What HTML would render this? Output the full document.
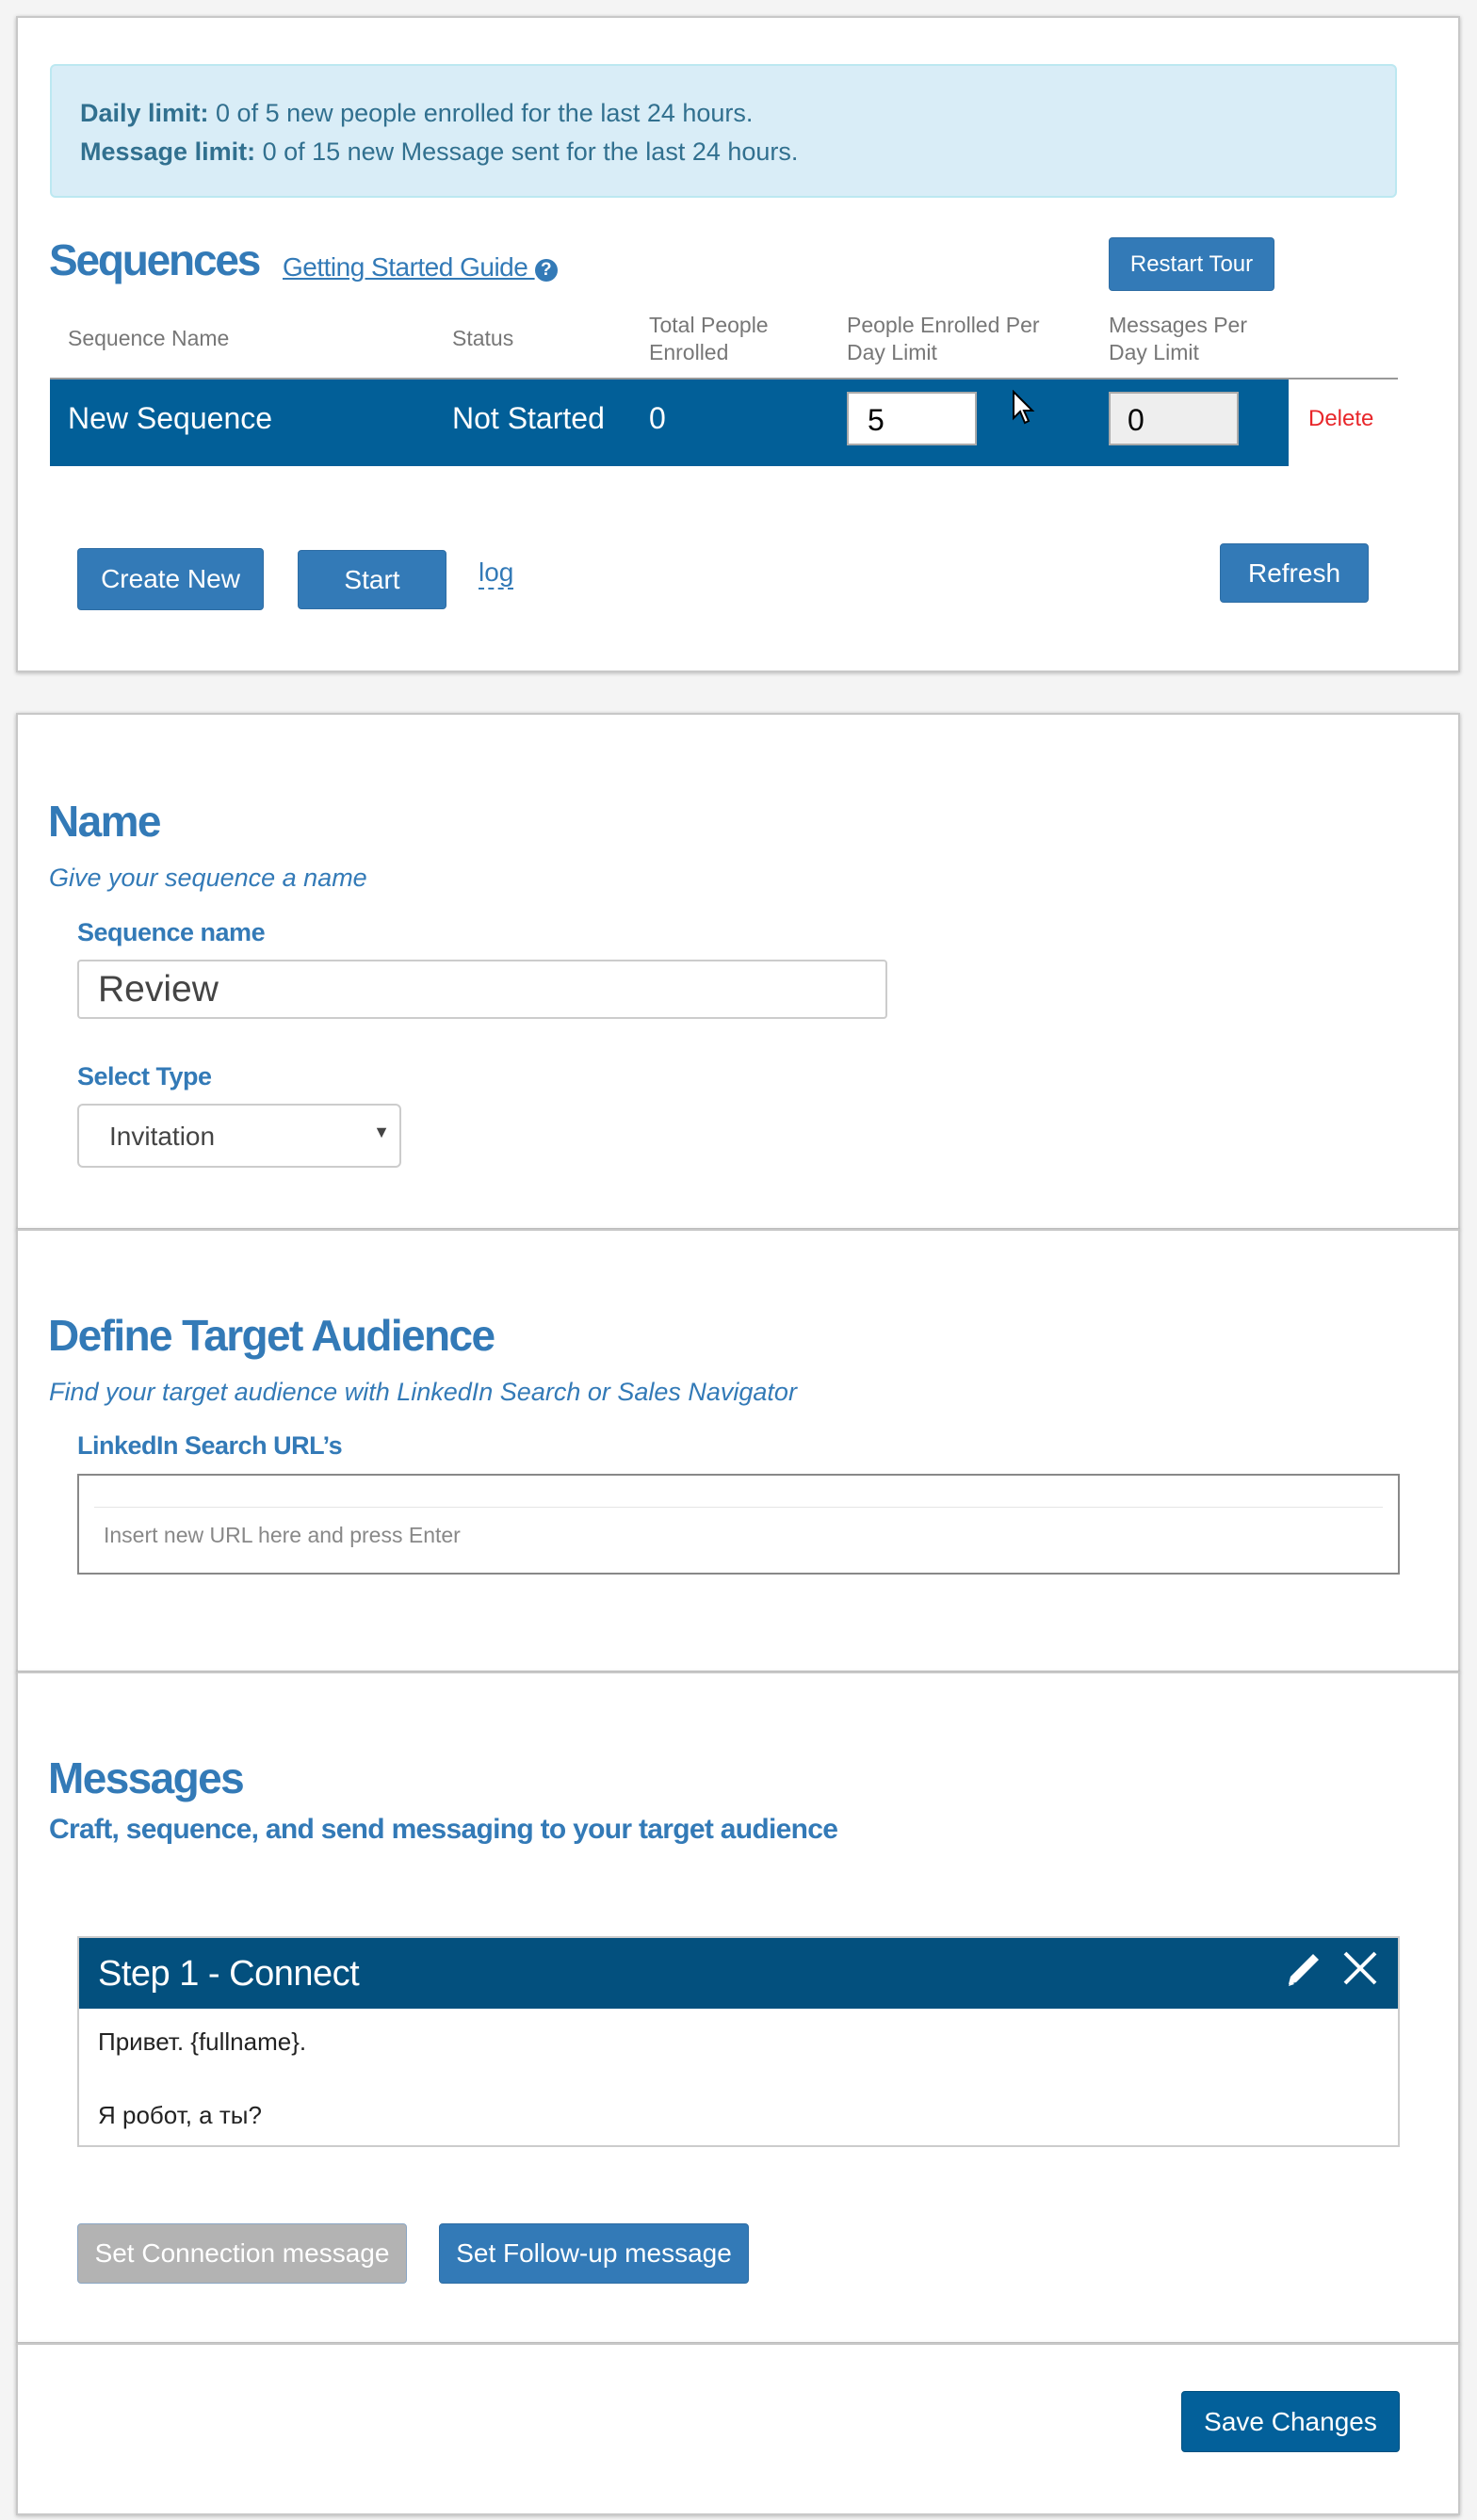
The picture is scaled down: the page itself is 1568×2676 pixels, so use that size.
<!DOCTYPE html>
<html><head><meta charset="utf-8"><style>
*{box-sizing:border-box;margin:0;padding:0}
body{width:1568px;height:2676px;background:#f4f4f4;position:relative;font-family:"Liberation Sans","Noto Sans CJK SC",sans-serif;overflow:hidden}
.a{position:absolute;white-space:nowrap}
.card{position:absolute;left:17px;width:1533px;background:#fff;border:2px solid #c8c8c8;box-shadow:0 1px 4px rgba(0,0,0,.25)}
.btn{position:absolute;background:#337ab7;border:1px solid #2e6da4;border-radius:4px;color:#fff;font-size:28px;display:flex;align-items:center;justify-content:center}
.h{color:#337ab7;font-size:46px;letter-spacing:-1.6px;font-weight:bold}
.sub{color:#337ab7;font-size:27px;font-style:italic}
.lbl{color:#337ab7;font-size:27px;font-weight:bold;letter-spacing:-.5px}
.th{color:#777;font-size:23px;line-height:29px}
.tr{color:#fff;font-size:32px;top:426px}
</style></head><body>
<div class="card" style="top:17px;height:697px"></div>
<div class="card" style="top:757px;height:549px"></div>
<div class="card" style="top:1305px;height:471px"></div>
<div class="card" style="top:1775px;height:714px"></div>
<div class="card" style="top:2488px;height:183px"></div>

<div class="a" style="left:53px;top:68px;width:1430px;height:142px;background:#d9edf7;border:2px solid #bce8f1;border-radius:6px"></div>
<div class="a" style="left:85px;top:100px;color:#31708f;font-size:27px;line-height:41px"><b>Daily limit:</b> 0 of 5 new people enrolled for the last 24 hours.<br><b>Message limit:</b> 0 of 15 new Message sent for the last 24 hours.</div>

<div class="a h" style="left:52px;top:249px;letter-spacing:-2.2px">Sequences</div>
<div class="a" style="left:300px;top:268px;color:#337ab7;font-size:28px;text-decoration:underline;letter-spacing:-.5px;font-weight:500">Getting Started Guide <span style="display:inline-block;width:24px;height:24px;border-radius:50%;background:#337ab7;color:#fff;font-size:19px;text-align:center;line-height:24px;font-weight:bold;vertical-align:1px;text-decoration:none">?</span></div>
<div class="btn" style="left:1177px;top:252px;width:176px;height:57px;font-size:24px">Restart Tour</div>

<div class="a th" style="left:72px;top:345px">Sequence Name</div>
<div class="a th" style="left:480px;top:345px">Status</div>
<div class="a th" style="left:689px;top:331px">Total People<br>Enrolled</div>
<div class="a th" style="left:899px;top:331px">People Enrolled Per<br>Day Limit</div>
<div class="a th" style="left:1177px;top:331px">Messages Per<br>Day Limit</div>
<div class="a" style="left:53px;top:401px;width:1431px;height:2px;background:#999"></div>
<div class="a" style="left:53px;top:403px;width:1315px;height:92px;background:#025f98"></div>
<div class="a tr" style="left:72px">New Sequence</div>
<div class="a tr" style="left:480px">Not Started</div>
<div class="a tr" style="left:689px">0</div>
<div class="a" style="left:899px;top:416px;width:138px;height:57px;background:#fff;border:2px solid #aaa;font-size:32px;padding:10px 20px">5</div>
<div class="a" style="left:1177px;top:416px;width:138px;height:57px;background:#eee;border:2px solid #aaa;font-size:32px;padding:10px 18px">0</div>
<svg class="a" style="left:1074px;top:414px" width="28" height="40" viewBox="0 0 28 40"><path d="M2 2 L2 30 L9 23 L14 35 L18 33 L13 22 L22 22 Z" fill="#fff" stroke="#000" stroke-width="2"/></svg>
<div class="a" style="left:1389px;top:431px;color:#e8262a;font-size:24px">Delete</div>

<div class="btn" style="left:82px;top:582px;width:198px;height:66px">Create New</div>
<div class="btn" style="left:316px;top:584px;width:158px;height:63px">Start</div>
<div class="a" style="left:508px;top:592px;color:#337ab7;font-size:28px;border-bottom:2px dashed #337ab7;line-height:32px">log</div>
<div class="btn" style="left:1295px;top:577px;width:158px;height:63px">Refresh</div>

<div class="a h" style="left:51px;top:845px">Name</div>
<div class="a sub" style="left:52px;top:917px">Give your sequence a name</div>
<div class="a lbl" style="left:82px;top:975px">Sequence name</div>
<div class="a" style="left:82px;top:1019px;width:860px;height:63px;border:2px solid #ccc;border-radius:4px;font-size:39px;color:#444;padding:8px 20px">Review</div>
<div class="a lbl" style="left:82px;top:1128px">Select Type</div>
<div class="a" style="left:82px;top:1172px;width:344px;height:68px;border:2px solid #ccc;border-radius:6px;font-size:28px;color:#444;padding:17px 32px">Invitation<span style="position:absolute;right:10px;top:18px;font-size:18px">▼</span></div>

<div class="a h" style="left:51px;top:1391px">Define Target Audience</div>
<div class="a sub" style="left:52px;top:1463px">Find your target audience with LinkedIn Search or Sales Navigator</div>
<div class="a lbl" style="left:82px;top:1520px">LinkedIn Search URL’s</div>
<div class="a" style="left:82px;top:1565px;width:1404px;height:107px;border:2px solid #888"></div>
<div class="a" style="left:100px;top:1600px;width:1368px;height:1px;background:#e5e5e5"></div>
<div class="a" style="left:110px;top:1617px;color:#888;font-size:23px">Insert new URL here and press Enter</div>

<div class="a h" style="left:51px;top:1861px">Messages</div>
<div class="a" style="left:52px;top:1926px;color:#337ab7;font-size:30px;font-weight:bold;letter-spacing:-.7px">Craft, sequence, and send messaging to your target audience</div>
<div class="a" style="left:82px;top:2056px;width:1404px;height:224px;border:2px solid #ccc;background:#fff"></div>
<div class="a" style="left:84px;top:2058px;width:1400px;height:75px;background:#03507e"></div>
<div class="a" style="left:104px;top:2075px;color:#fff;font-size:38px;letter-spacing:-.5px;font-weight:500">Step 1 - Connect</div>
<svg class="a" style="left:1362px;top:2068px" width="104" height="44" viewBox="0 0 104 44"><path d="M6 39 L8 31 L32 7 L38 13 L14 37 Z" fill="#fff"/><path d="M6 41 L8 35 L12 39 Z" fill="#fff"/><path d="M66 6 L98 38 M98 6 L66 38" stroke="#fff" stroke-width="4"/></svg>
<div class="a" style="left:104px;top:2153px;color:#222;font-size:26px">Привет. {fullname}.</div>
<div class="a" style="left:104px;top:2231px;color:#222;font-size:26px">Я робот, а ты?</div>
<div class="btn" style="left:82px;top:2361px;width:350px;height:64px;background:#b3b3b3;border-color:#8aa6c4">Set Connection message</div>
<div class="btn" style="left:466px;top:2361px;width:329px;height:64px">Set Follow-up message</div>

<div class="btn" style="left:1254px;top:2539px;width:232px;height:65px;background:#03609a;border-color:#025080">Save Changes</div>
</body></html>
